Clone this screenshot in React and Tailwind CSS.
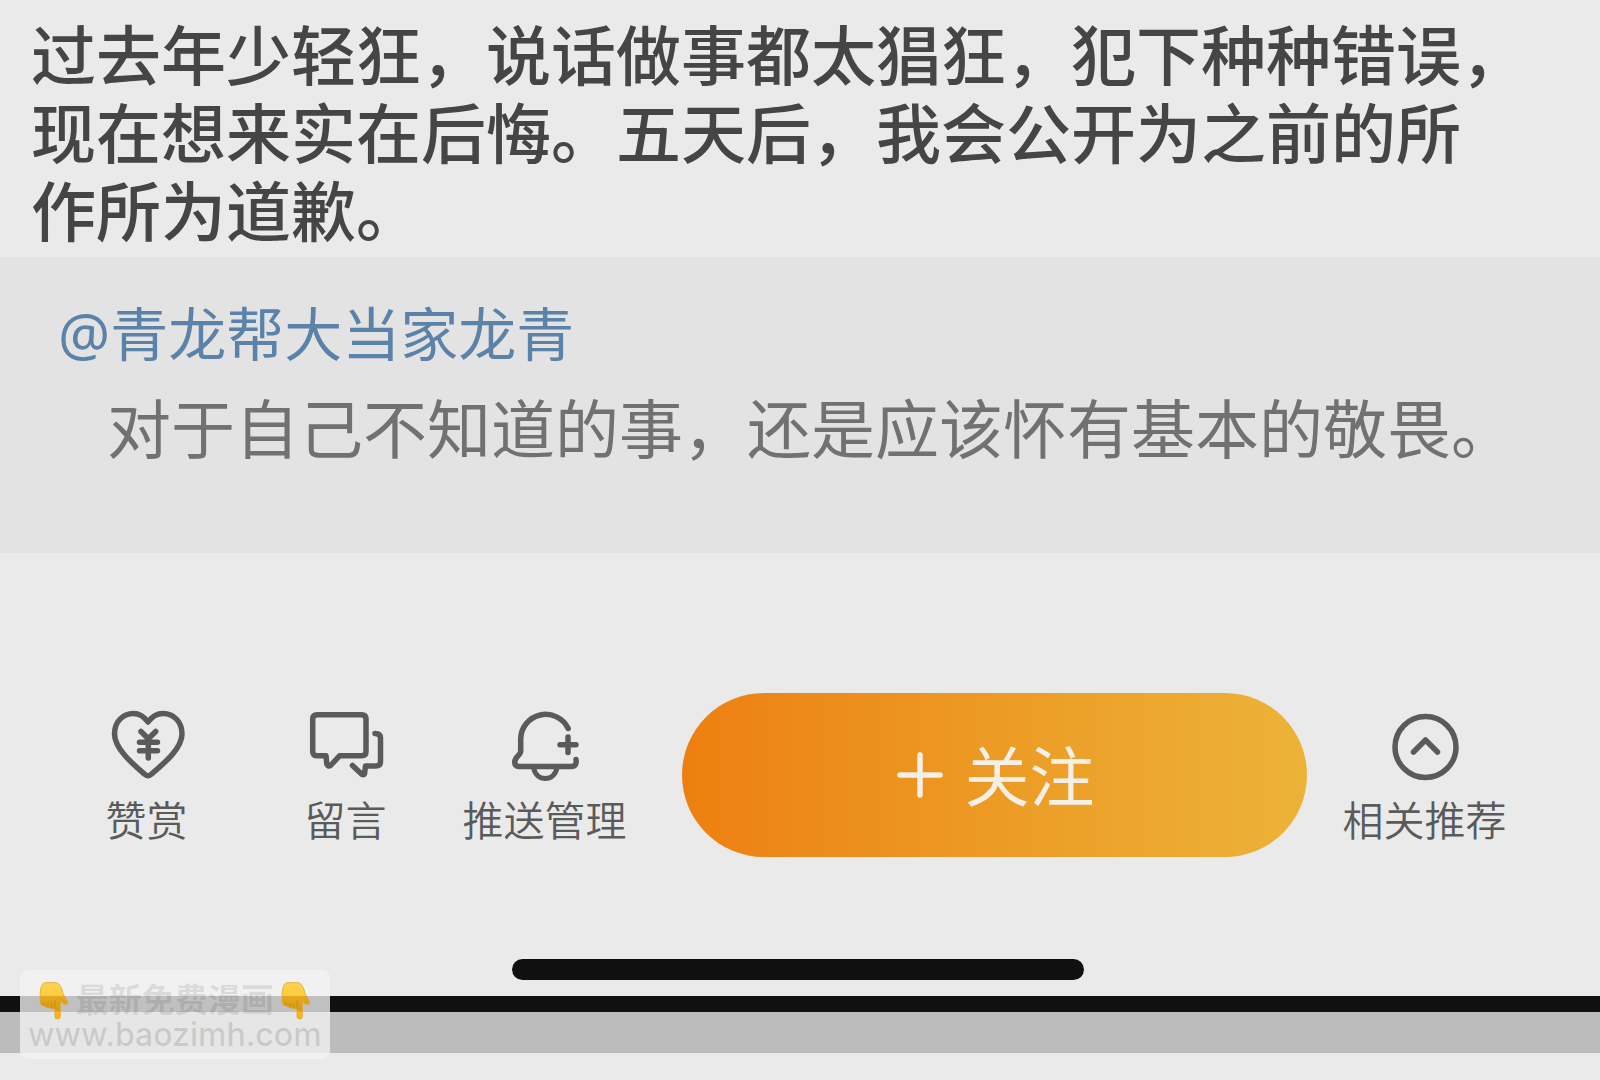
import React from "react";

const CJK = "font-['Noto_Sans_CJK_SC',sans-serif]";

function HeartYenIcon() {
  return (
    <svg aria-hidden="true" viewBox="0 0 80 72" className="h-[72px] w-20" fill="none" stroke="currentColor" strokeWidth="5.5" strokeLinecap="round" strokeLinejoin="round">
      <path d="M41 13C37 7.500 32 4.500 26.500 4.500C15.500 4.500 7.500 13 7.500 25C7.500 40 27 56 38 65.500Q41 68 44 65.500C55 56 75 40 75 25C75 13 67 4.500 56 4.500C50 4.500 45 7.500 41 13Z" />
      <path d="M34 22.500L41.300 29.800L48.700 22.500M32.500 33.300H50.500M32.500 41.700H50.500M41.300 30V49" />
    </svg>
  );
}

function CommentsIcon() {
  return (
    <svg aria-hidden="true" viewBox="0 0 80 72" className="h-[72px] w-20" fill="none" stroke="currentColor" strokeWidth="5.5" strokeLinecap="round" strokeLinejoin="round">
      <path d="M11 5.700H55.500Q60 5.700 60 10V42.500Q60 46.800 55.500 46.800H33.500L25 56Q21.800 58.500 20.800 55L20 46.800H11Q6.700 46.800 6.700 42.500V10Q6.700 5.700 11 5.700Z" />
      <path d="M69 24.500Q74.500 24.500 74.500 29V52.500Q74.500 57 70 57H59.500L58.500 65Q57.500 66.500 55.500 65L46.500 56.500" />
    </svg>
  );
}

function BellPlusIcon() {
  return (
    <svg aria-hidden="true" viewBox="0 0 80 72" className="h-[72px] w-20" fill="none" stroke="currentColor" strokeWidth="5.5" strokeLinecap="round" strokeLinejoin="round">
      <path d="M63.200 19.500A25 25 0 0 0 15.700 30V42C15.700 46 9.700 48 9.700 53Q9.700 57.500 14 57.500H66.500Q72 57.500 71 50.500" />
      <path strokeLinecap="butt" strokeWidth="5" d="M28.500 58.500C30 66 35 69.500 40.300 69.500C45.600 69.500 50.600 66 52 58.500" />
      <path d="M63 28V43.500M55 35.700H71" />
    </svg>
  );
}

function CircleUpIcon() {
  return (
    <svg aria-hidden="true" viewBox="0 0 80 72" className="h-[72px] w-20" fill="none" stroke="currentColor" strokeWidth="5.5" strokeLinecap="round" strokeLinejoin="round">
      <circle cx="40.500" cy="38" r="30.500" />
      <path d="M28.500 43L40.500 31L52.500 43" />
    </svg>
  );
}

function PointDownIcon() {
  return (
    <svg aria-hidden="true" viewBox="0 0 30 38" className="h-[38px] w-[30px] shrink-0">
      <defs>
        <linearGradient id="hand" gradientUnits="userSpaceOnUse" x1="0" y1="0" x2="0" y2="38">
          <stop offset="0" stopColor="#ffd24c" />
          <stop offset="0.36" stopColor="#fccb40" />
          <stop offset="0.37" stopColor="#e3a91f" />
          <stop offset="0.77" stopColor="#d99a10" />
          <stop offset="0.78" stopColor="#fdb61c" />
          <stop offset="1" stopColor="#fbb01a" />
        </linearGradient>
      </defs>
      <path fill="url(#hand)" stroke="#e3a32a" strokeWidth="0.8" strokeLinejoin="round" d="M6 .7H17Q19 .7 20.500 3Q23.500 7 24 11.500L28.500 19.500Q29 22.500 26.500 22.500Q23.500 22 22 19.500L21.300 17V34.500Q21.300 37 18.700 37Q16 37 16 34.500V26.500Q14 27.500 12.500 26Q10.500 27 8.800 25Q6.500 26 5 23.500Q1.500 24 1.200 20.500V10Q1.500 6 3.500 2.300Q4.500 .7 6 .7Z" />
      <path fill="none" stroke="#c98a10" strokeWidth="0.8" strokeLinecap="round" d="M5 23.500V20.500M8.800 25V21M12.500 26V21.500M16 26.500V19" />
    </svg>
  );
}

function ActionButton({ icon, label }) {
  return (
    <button type="button" className="flex flex-col items-center gap-[13px] pt-4 text-[#5a5a5a]">
      {icon}
      <span className="text-[41px] leading-[48px] font-[350] whitespace-nowrap">{label}</span>
    </button>
  );
}

export default function App() {
  return (
    <div className={`relative min-h-screen bg-[#eaeaea] ${CJK}`}>
      <main>
        <article>
          <p lang="zh-CN" className="pt-[13px] pr-10 pb-[10px] pl-[31px] text-[65px] leading-[78px] font-medium text-[#454545]">
            过去年少轻狂，说话做事都太猖狂，犯下种种错误，
            <br />
            现在想来实在后悔。五天后，我会公开为之前的所
            <br />
            作所为道歉。
          </p>
          <blockquote className="bg-[#e3e3e3] pt-[41px] pr-10 pb-[88px] pl-[58px]">
            <a href="#user" className="block font-['Noto_Sans','Noto_Sans_CJK_SC',sans-serif] text-[58px] leading-[72px] text-[#5b82a8]">
              @青龙帮大当家龙青
            </a>
            <p className="mt-[15px] pl-[49px] text-[64px] leading-[80px] text-[#717171]">
              对于自己不知道的事，还是应该怀有基本的敬畏。
            </p>
          </blockquote>
        </article>
      </main>

      <nav aria-label="操作" className="grid grid-cols-[199fr_199fr_199fr_681fr_199fr] items-start pt-[140px] pr-[76px] pl-[47px]">
        <ActionButton icon={<HeartYenIcon />} label="赞赏" />
        <ActionButton icon={<CommentsIcon />} label="留言" />
        <ActionButton icon={<BellPlusIcon />} label="推送管理" />
        <div className="pr-[18px] pl-[38px]">
          <button type="button" className="flex h-[164px] w-full items-center justify-center gap-5 rounded-full bg-linear-to-r from-[#ed7f10] via-[#ec9b24] to-[#ecb338] pl-0.5 text-[#f4f0e8]">
            <svg aria-hidden="true" viewBox="0 0 48 48" className="size-12" fill="none" stroke="currentColor" strokeWidth="5.5" strokeLinecap="round">
              <path d="M24 4V44M4 24H44" />
            </svg>
            <span className="mb-1 text-[65px] leading-[80px]">关注</span>
          </button>
        </div>
        <ActionButton icon={<CircleUpIcon />} label="相关推荐" />
      </nav>

      <footer>
        <div className="pt-[102px] pr-9 pb-4 pl-8">
          <div className="mx-auto h-[21px] max-w-[572px] rounded-full bg-[#101010]" />
        </div>
        <div className="h-4 bg-[#101010]" />
        <div className="h-[41px] bg-[#bcbcbc]" />
      </footer>

      <aside className="absolute top-[970px] left-5 rounded-lg bg-[#f2f2f2]/78 px-2 pt-[9px] pb-3">
        <div className="flex items-center justify-center gap-[7px]">
          <PointDownIcon />
          <span className="mb-1.5 text-[33px] leading-[38px] font-bold text-black/10">最新免费漫画</span>
          <PointDownIcon />
        </div>
        <div className="text-center font-['Inter',sans-serif] text-[32px] leading-[24px] font-medium text-black/12">www.baozimh.com</div>
      </aside>
    </div>
  );
}
